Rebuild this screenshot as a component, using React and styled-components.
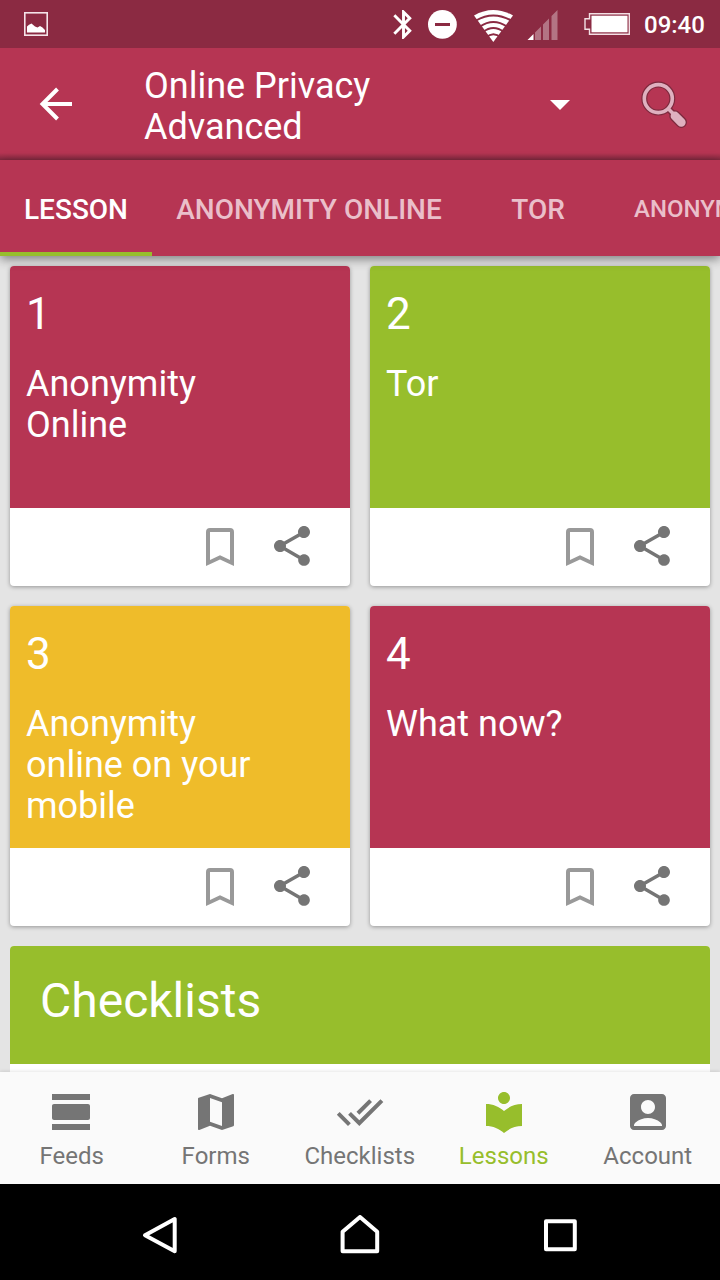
import React, { useState } from "react";
import styled, { createGlobalStyle } from "styled-components";
import {
  MdAccountBox,
  MdBluetooth,
  MdDoneAll,
  MdLocalLibrary,
  MdMap,
  MdShare,
  MdViewDay,
} from "react-icons/md";

const lessons = [
  { id: 1, title: "Anonymity Online", color: "#b63553" },
  { id: 2, title: "Tor", color: "#97be2c" },
  { id: 3, title: "Anonymity online on your mobile", color: "#efbc2a" },
  { id: 4, title: "What now?", color: "#b63553" },
];

const tabs = [
  { label: "LESSON", width: 152 },
  { label: "ANONYMITY ONLINE", width: 314 },
  { label: "TOR", width: 144 },
  { label: "ANONYMITY ONLINE ON YOUR MOBILE", width: 420, small: true },
];

const menus = [
  { label: "Feeds", Icon: MdViewDay },
  { label: "Forms", Icon: MdMap },
  { label: "Checklists", Icon: MdDoneAll },
  { label: "Lessons", Icon: MdLocalLibrary },
  { label: "Account", Icon: MdAccountBox },
];

const StatusIcons = () => (
  <svg width="215" height="48" viewBox="421 0 215 48" fill="#fff">
    <circle cx="442.4" cy="24.4" r="14.4" />
    <rect x="435" y="23" width="15" height="3" fill="#8b2a42" />
    {/* wifi */}
    <path d="M474 15.5Q493 4.500 513 15.500L493.300 42z" />
    <g fill="none" stroke="#8b2a42" strokeWidth="2">
      <path d="M476 20.500Q493.300 10.500 511 20.500" />
      <path d="M480 26.500Q493.300 17.500 507 26.500" />
      <path d="M483 32Q493.300 24 504 32" />
      <path d="M486 37.500Q493.300 31 501 37.500" />
    </g>
    {/* signal */}
    <path d="M527.500 40L533.500 34V40z" />
    <path
      d="M535 40V32.500L541 26.500V40zM543 40V24.500L549 18.500V40zM551.500 40V16L557.500 10V40z"
      opacity=".35"
    />
    {/* battery */}
    <path
      d="M589.500 13.700H629.300V34.300H589.500V29.300H585V18.700H589.500z"
      fill="none"
      stroke="#f3dfe4"
      strokeWidth="1.4"
    />
    <rect x="591.5" y="15.7" width="36" height="16.6" />
  </svg>
);

const Bookmark = () => (
  <svg width="28" height="38" viewBox="0 0 28 38" fill="#999">
    <path
      fillRule="evenodd"
      d="M4 0H24Q28 0 28 4V38L14 31.500L0 38V4Q0 0 4 0zM4 4V32L14 27.200L24 32V4z"
    />
  </svg>
);

const LessonCard = ({ lesson }) => (
  <Card>
    <CardTop $color={lesson.color}>
      <Number>{lesson.id}</Number>
      <CardTitle>{lesson.title}</CardTitle>
    </CardTop>
    <CardActions>
      <BookmarkBtn>
        <Bookmark />
      </BookmarkBtn>
      <MdShare size={48} color="#757575" />
    </CardActions>
  </Card>
);

const App = () => {
  const [activeTab, setActiveTab] = useState(0);
  const [activeMenu, setActiveMenu] = useState("Lessons");

  return (
    <>
      <GlobalStyle />
      <Screen>
        <StatusBar>
          <svg width="24" height="24" viewBox="0 0 24 24">
            <rect x=".8" y=".8" width="22.4" height="22.4" fill="none" stroke="#f5e3e8" strokeWidth="1.6" />
            <path d="M3 20.500V14.500L5 12.800L7.500 11.500L11 14.500L13.500 15.500L16 14L18.500 15.500L21 18V20.500z" fill="#fff" />
          </svg>
          <StatusRight>
            <MdBluetooth size={35} color="#fff" />
            <StatusIcons />
            <Time>09:40</Time>
          </StatusRight>
        </StatusBar>

        <Header>
          <svg width="34" height="34" viewBox="0 0 34 34" fill="none" stroke="#fff" strokeWidth="4">
            <path d="M18.500 2L3.500 17L18.500 32M3.500 17H33" />
          </svg>
          <HeaderTitle>Online Privacy Advanced</HeaderTitle>
          <Caret>
            <svg width="20" height="10" viewBox="0 0 20 10" fill="#fff">
              <path d="M0 0H20L10 10z" />
            </svg>
          </Caret>
          <SearchBtn>
            <svg width="48" height="48" viewBox="0 0 48 48" fill="none">
              <g stroke="#7d2a3e" strokeLinecap="round">
                <circle cx="18.3" cy="18.6" r="14" strokeWidth="6" />
                <path d="M28.500 29L33 33.500" strokeWidth="6.500" />
                <path d="M35 36L41.300 42.300" strokeWidth="11.5" />
              </g>
              <g stroke="#dfb0bf" strokeLinecap="round">
                <circle cx="18.3" cy="18.6" r="14" strokeWidth="3.6" />
                <path d="M28.500 29L33 33.500" strokeWidth="3.600" />
                <path d="M35 36L41.300 42.300" strokeWidth="8.8" />
              </g>
            </svg>
          </SearchBtn>
        </Header>

        <TabBar>
          {tabs.map((tab, i) => (
            <Tab
              key={tab.label}
              $width={tab.width}
              $small={tab.small}
              $active={i === activeTab}
              onClick={() => setActiveTab(i)}
            >
              {tab.label}
            </Tab>
          ))}
        </TabBar>

        <Content>
          <Grid>
            {lessons.map((lesson) => (
              <LessonCard key={lesson.id} lesson={lesson} />
            ))}
          </Grid>
          <Checklists>
            <ChecklistsTitle>Checklists</ChecklistsTitle>
          </Checklists>
        </Content>

        <BottomMenu>
          {menus.map(({ label, Icon }) => (
            <MenuItem
              key={label}
              $active={label === activeMenu}
              onClick={() => setActiveMenu(label)}
            >
              <Icon size={48} />
              <span>{label}</span>
            </MenuItem>
          ))}
        </BottomMenu>

        <SystemBar>
          <svg width="40" height="40" viewBox="0 0 40 40">
            <path d="M5 20.300L34.700 4V36.300z" />
          </svg>
          <svg width="40" height="40" viewBox="0 0 40 40">
            <path d="M2.600 36.200V16.800L20 2L37.200 16.800V36.200z" />
          </svg>
          <svg width="40" height="40" viewBox="0 0 40 40">
            <path d="M6 6.300H34.800V34.300H6z" />
          </svg>
        </SystemBar>
      </Screen>
    </>
  );
};

export default App;

const GlobalStyle = createGlobalStyle`
  * {
    box-sizing: border-box;
  }

  body {
    margin: 0;
    font-family: Roboto, "Noto Sans", sans-serif;
  }

  svg {
    display: block;
    flex-shrink: 0;
  }
`;

const Screen = styled.div`
  width: 720px;
  height: 1280px;
  display: flex;
  flex-direction: column;
  overflow: hidden;
  background: #e4e4e4;
`;

const StatusBar = styled.div`
  height: 48px;
  flex-shrink: 0;
  display: flex;
  align-items: center;
  justify-content: space-between;
  padding: 0 16px 0 24px;
  background: #8b2a42;
`;

const StatusRight = styled.div`
  display: flex;
  align-items: center;
`;

const Time = styled.div`
  width: 68px;
  padding: 2px 0 0 8px;
  color: #fff;
  font-size: 24px;
  font-weight: 500;
  white-space: nowrap;
`;

const Header = styled.header`
  height: 112px;
  flex-shrink: 0;
  display: flex;
  align-items: center;
  padding: 0 32px 0 39px;
  background: linear-gradient(transparent 105px, rgba(80, 30, 45, 0.5) 112px),
    #b63553;
`;

const HeaderTitle = styled.h1`
  width: 300px;
  margin: 5px 106px 0 71px;
  color: #fff;
  font-size: 36px;
  font-weight: 400;
  line-height: 41px;
`;

const Caret = styled.div`
  padding-top: 2px;
`;

const SearchBtn = styled.div`
  margin-left: auto;
`;

const TabBar = styled.nav`
  position: relative;
  z-index: 1;
  height: 96px;
  flex-shrink: 0;
  display: flex;
  background: #b63553;
  box-shadow: 0 3px 10px rgba(0, 0, 0, 0.45);
`;

const Tab = styled.div`
  width: ${({ $width }) => $width}px;
  flex-shrink: 0;
  display: flex;
  align-items: center;
  justify-content: ${({ $small }) => ($small ? "flex-start" : "center")};
  padding: ${({ $small }) => ($small ? "6px 0 0 24px" : "6px 0 0")};
  border-bottom: 4px solid
    ${({ $active }) => ($active ? "#97be2c" : "transparent")};
  color: ${({ $active }) => ($active ? "#fff" : "#eabfca")};
  font-size: ${({ $small }) => ($small ? 24 : 28)}px;
  font-weight: 500;
  white-space: nowrap;
`;

const Content = styled.main`
  height: 816px;
  flex-shrink: 0;
  padding: 10px;
  overflow: hidden;
`;

const Grid = styled.div`
  display: grid;
  grid-template-columns: 1fr 1fr;
  gap: 20px;
`;

const Card = styled.div`
  height: 320px;
  overflow: hidden;
  border-radius: 4px;
  background: #fff;
  box-shadow: 0 1px 4px rgba(0, 0, 0, 0.35);
`;

const CardTop = styled.div`
  height: 242px;
  padding: 22px 80px 0 16px;
  background: ${({ $color }) => $color};
  color: #fff;
`;

const Number = styled.div`
  font-size: 44px;
  line-height: 52px;
`;

const CardTitle = styled.div`
  margin-top: 23.5px;
  font-size: 36px;
  line-height: 41.4px;
`;

const CardActions = styled.div`
  height: 78px;
  display: flex;
  align-items: center;
  justify-content: flex-end;
  gap: 34px;
  padding: 0 34px 2px 0;
`;

const BookmarkBtn = styled.div`
  padding-top: 2px;
`;

const Checklists = styled.div`
  height: 200px;
  margin-top: 20px;
  overflow: hidden;
  border-radius: 4px;
  background: #fff;
`;

const ChecklistsTitle = styled.div`
  height: 118px;
  display: flex;
  align-items: center;
  padding: 0 0 10px 30px;
  background: #97be2c;
  color: #fff;
  font-size: 48px;
`;

const BottomMenu = styled.nav`
  position: relative;
  height: 112px;
  flex-shrink: 0;
  display: flex;
  background: #fafafa;
  box-shadow: 0 0 4px rgba(0, 0, 0, 0.15);
`;

const MenuItem = styled.div`
  flex: 1;
  display: flex;
  flex-direction: column;
  align-items: center;
  padding-top: 16px;
  color: ${({ $active }) => ($active ? "#97be2c" : "#757575")};
  font-size: 24px;

  span {
    margin: 6px 0.5px 0 0;
    line-height: 28px;
  }
`;

const SystemBar = styled.footer`
  height: 96px;
  flex-shrink: 0;
  display: flex;
  align-items: center;
  justify-content: center;
  gap: 160px;
  padding-top: 6px;
  background: #000;

  path {
    fill: none;
    stroke: #fff;
    stroke-width: 4;
    stroke-linejoin: round;
  }
`;
